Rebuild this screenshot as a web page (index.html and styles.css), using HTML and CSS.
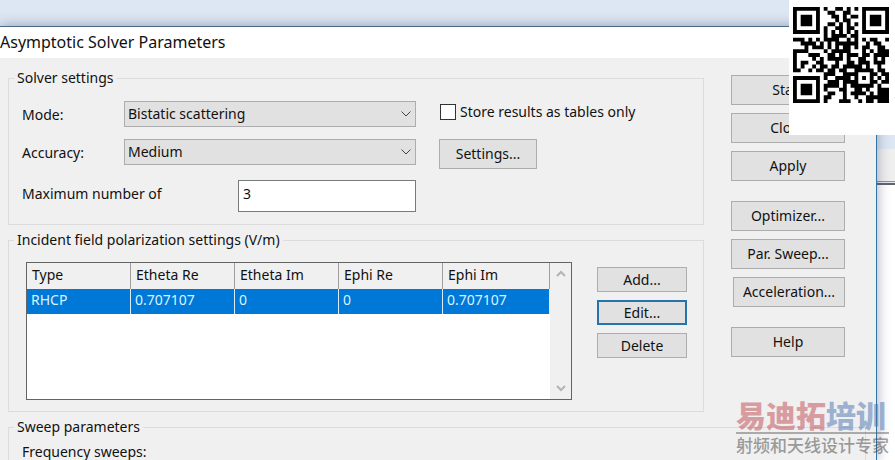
FILE: index.html
```
<!DOCTYPE html>
<html lang="en">
<head>
    <meta charset="UTF-8">
    <meta name="viewport" content="width=device-width, initial-scale=1.0">
    <title>Asymptotic Solver Parameters</title>
    <link rel="stylesheet" href="styles.css">
</head>
<body>
    <div class="dialog">
        <h1 class="title-bar">Asymptotic Solver Parameters</h1>
        <form class="dialog-body">
            <div class="columns">
                <div class="groups">
                    <fieldset class="group">
                        <legend>Solver settings</legend>
                        <div class="solver-grid">
                            <label for="mode">Mode:</label>
                            <div class="select-wrap">
                                <select id="mode">
                                    <option>Bistatic scattering</option>
                                    <option>Monostatic scattering</option>
                                </select>
                                <svg class="arrow" viewBox="0 0 10 6"><path d="M0.5 0.5 L5 5 L9.5 0.5"/></svg>
                            </div>
                            <label class="check"><input type="checkbox">Store results as tables only</label>

                            <label for="accuracy">Accuracy:</label>
                            <div class="select-wrap">
                                <select id="accuracy">
                                    <option>Low</option>
                                    <option selected>Medium</option>
                                    <option>High</option>
                                </select>
                                <svg class="arrow" viewBox="0 0 10 6"><path d="M0.5 0.5 L5 5 L9.5 0.5"/></svg>
                            </div>
                            <button type="button" class="settings-btn">Settings...</button>

                            <div class="max-row">
                                <label for="maxNumber">Maximum number of</label>
                                <input type="text" id="maxNumber" value="3">
                            </div>
                        </div>
                    </fieldset>

                    <fieldset class="group">
                        <legend>Incident field polarization settings (V/m)</legend>
                        <div class="polarization">
                            <div class="list-box">
                                <div class="list-content">
                                    <table>
                                        <thead>
                                            <tr><th>Type</th><th>Etheta Re</th><th>Etheta Im</th><th>Ephi Re</th><th>Ephi Im</th></tr>
                                        </thead>
                                        <tbody>
                                            <tr><td>RHCP</td><td>0.707107</td><td>0</td><td>0</td><td>0.707107</td></tr>
                                        </tbody>
                                    </table>
                                </div>
                                <div class="scrollbar">
                                    <svg viewBox="0 0 10 7"><path d="M1 6 L5 2 L9 6"/></svg>
                                    <svg viewBox="0 0 10 7"><path d="M1 1 L5 5 L9 1"/></svg>
                                </div>
                            </div>
                            <div class="list-buttons">
                                <button type="button">Add...</button>
                                <button type="button" class="default">Edit...</button>
                                <button type="button">Delete</button>
                            </div>
                        </div>
                    </fieldset>
                </div>

                <div class="actions">
                    <button type="button">Start</button>
                    <button type="button">Close</button>
                    <button type="button">Apply</button>
                    <button type="button" class="spaced">Optimizer...</button>
                    <button type="button">Par. Sweep...</button>
                    <button type="button" class="narrow">Acceleration...</button>
                    <button type="button" class="spaced">Help</button>
                </div>
            </div>

            <fieldset class="group sweep">
                <legend>Sweep parameters</legend>
                <div>Frequency sweeps:</div>
            </fieldset>
        </form>
    </div>

    <div class="qr-card">
        <svg id="qr" viewBox="0 0 25 25" role="img" aria-label="QR code"></svg>
    </div>

    <div class="watermark" lang="zh-CN">
        <div class="brand"><span class="red">易迪拓</span><span class="blue">培训</span></div>
        <div class="slogan">射频和天线设计专家</div>
    </div>

    <script>
        // One string per row of modules, # is dark
        const rows = [
            '#######.#..##.#.#.#######',
            '#.....#..##..##...#.....#',
            '#.###.#...##.#.##.#.###.#',
            '#.###.#....#.##...#.###.#',
            '#.###.#..##.#.#.#.#.###.#',
            '#.....#.#..##.##..#.....#',
            '#######.#.#.#.#.#.#######',
            '........#.####.##........',
            '###.#.#.####..#.#.#.##..#',
            '..####.#.#.######..#.##..',
            '...#.###.#.#.##.#.##..##.',
            '####....#.#####...#.#.###',
            '#...###..##.#.###.##.####',
            '#....#.#.####.#..##..#.#.',
            '#.##..##...#..##.###.###.',
            '#.#..#.##.##.#####.#..#..',
            '##..#.##.##.##..#####.##.',
            '........###..####...##.##',
            '#######.#..####.#.#.#.#.#',
            '#.....#..###.####...##.##',
            '#.###.#.####.#.######.#..',
            '#.###.#.#...##..##.#..###',
            '#.###.#..##..#.####.#.###',
            '#.....#.##...#..#..######',
            '#######.#...###..#.##.###'
        ];
        let d = '';
        rows.forEach((row, y) => {
            [...row].forEach((cell, x) => {
                if (cell === '#') d += `M${x} ${y}h1v1h-1z`;
            });
        });
        document.getElementById('qr').innerHTML = `<path d="${d}"/>`;
    </script>
</body>
</html>
```
FILE: styles.css
```
* {
    box-sizing: border-box;
}
body {
    margin: 0;
    height: 100vh;
    overflow: hidden;
    padding: 26px 18px 0 0;
    font-family: "Noto Sans", "Noto Sans CJK SC", sans-serif;
    font-size: 14px;
    line-height: 20px;
    color: #111;
    background: linear-gradient(#dde7f3 0 149px, #efefef 149px 181px, #7d93a8 181px 182px, #e4eaf0 182px 183px, #5c6670 183px 185px, #fff 185px);
}
.dialog {
    display: flex;
    flex-direction: column;
    height: 100%;
    background-color: #f0f0f0;
    border-top: 1px solid #4a6a86;
    border-right: 1px solid #2f75a8;
    box-shadow: 0 0 12px rgba(60, 60, 90, 0.45);
}
.title-bar {
    flex: none;
    margin: 0;
    height: 31px;
    line-height: 30px;
    font-size: 16px;
    font-weight: normal;
    background-color: #fff;
}
.dialog-body {
    flex: 1;
    display: flex;
    flex-direction: column;
    padding: 10px 10px 0 8px;
}
.columns {
    display: flex;
    gap: 27px;
    padding-right: 21px;
}
.groups {
    flex: 1;
}
.group {
    margin: 0 0 5px;
    padding: 12px 16px 11px 13px;
    border: 1px solid #dcdcdc;
}
.group legend {
    margin-left: -8px;
    padding: 0 3px;
}
button {
    height: 30px;
    padding: 0;
    font: inherit;
    color: #111;
    background-color: #e1e1e1;
    border: 1px solid #adadad;
    border-radius: 0;
}
.solver-grid {
    display: grid;
    grid-template-columns: 102px 292px 1fr;
    grid-template-rows: 38px 41px 32px;
    align-items: start;
    padding: 1px 0;
}
.solver-grid label {
    line-height: 28px;
}
.select-wrap {
    position: relative;
}
select {
    display: block;
    width: 100%;
    height: 26px;
    padding: 0 3px;
    font: inherit;
    color: #111;
    background-color: #e1e1e1;
    border: 1px solid #adadad;
    border-radius: 0;
    appearance: none;
}
.arrow {
    position: absolute;
    right: 5px;
    top: 10px;
    width: 10px;
    height: 6px;
    fill: none;
    stroke: #444;
    pointer-events: none;
}
.check {
    display: flex;
    align-items: center;
    gap: 4px;
    margin-left: 24px;
}
.solver-grid .check {
    line-height: 22px;
}
.check input {
    width: 16px;
    height: 16px;
    margin: 0;
    background-color: #fff;
    border: 1px solid #333;
    appearance: none;
}
.check input:checked {
    background-color: #333;
}
.settings-btn {
    width: 98px;
    margin-left: 23px;
}
.max-row {
    grid-column: 1 / 3;
    display: flex;
    justify-content: space-between;
}
.max-row input {
    width: 178px;
    height: 32px;
    padding: 0 4px 6px;
    font: inherit;
    color: #111;
    background-color: #fff;
    border: 1px solid #7a7a7a;
}
.polarization {
    display: flex;
    gap: 25px;
    padding-left: 4px;
}
.list-box {
    flex: 1;
    display: flex;
    height: 138px;
    background-color: #fff;
    border: 1px solid #646464;
}
.list-content {
    flex: 1;
}
table {
    width: 100%;
    table-layout: fixed;
    border-collapse: separate;
    border-spacing: 0;
}
th, td {
    text-align: left;
    font-weight: normal;
}
th {
    height: 26px;
    padding: 0 5px 2px;
    background-color: #f0f0f0;
    border-right: 1px solid #a0a0a0;
}
th:not(:last-child) {
    width: 104px;
}
td {
    height: 25px;
    padding: 0 4px 3px;
    color: #d8f4ff;
    background-color: #0078d7;
    border-right: 1px solid #d8ecfa;
}
.scrollbar {
    display: flex;
    flex-direction: column;
    justify-content: space-between;
    align-items: center;
    width: 21px;
    padding: 7px 0;
    background-color: #f0f0f0;
}
.scrollbar svg {
    width: 10px;
    height: 7px;
    fill: none;
    stroke: #b4b4b4;
    stroke-width: 2;
}
.list-buttons {
    display: flex;
    flex-direction: column;
    gap: 8px;
    width: 90px;
    padding-top: 5px;
}
.list-buttons button {
    height: 25px;
}
.list-buttons .default {
    border: 2px solid #2474a8;
}
.actions {
    display: flex;
    flex-direction: column;
    gap: 8px;
    width: 114px;
    padding-top: 7px;
}
.actions .spaced {
    margin-top: 12px;
}
.actions .narrow {
    margin-left: 2px;
}
.sweep {
    flex: 1;
    margin-bottom: 0;
    padding-top: 5px;
    padding-bottom: 0;
    border-bottom: 0;
}
.qr-card {
    position: absolute;
    top: 0;
    right: 0;
    width: 106px;
    height: 135px;
    padding: 7px 6px 0 4px;
    background-color: #fff;
}
.qr-card svg {
    display: block;
    width: 96px;
    height: 96px;
}
.watermark {
    position: absolute;
    right: 6px;
    bottom: 2px;
    opacity: 0.5;
}
.brand {
    font-size: 30px;
    line-height: 32px;
    font-weight: 900;
    border-bottom: 2px solid #666;
}
.brand .red {
    color: #c04a52;
}
.brand .blue {
    color: #4a72b0;
}
.slogan {
    font-size: 17px;
    line-height: 24px;
    font-weight: 500;
    color: #444;
}
```
